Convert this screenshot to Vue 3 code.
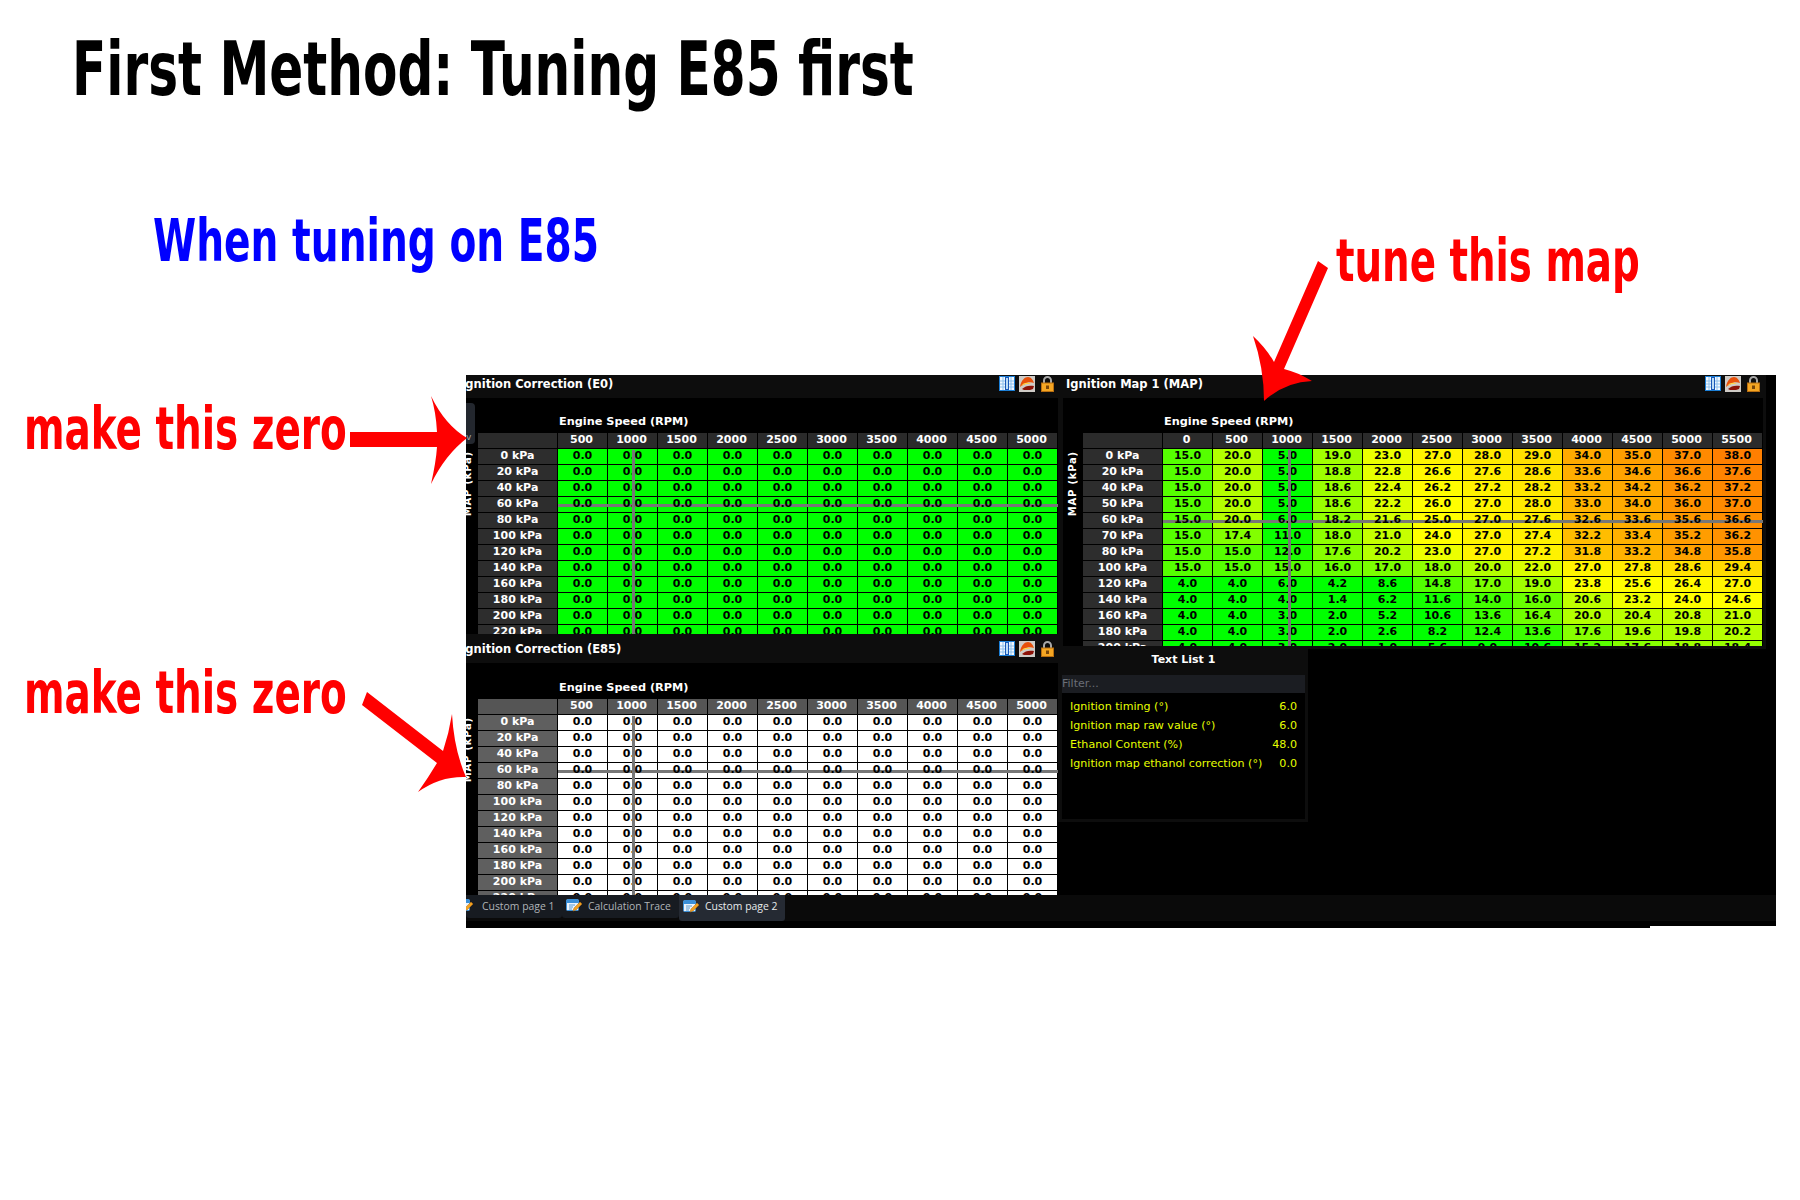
<script setup>
const heat = (v) => {
  // green -> yellow -> orange, same ramp the tuner uses for the map
  const r = Math.min(255, Math.max(0, Math.round(((v - 10.5) / 13.5) * 255)))
  const g = v <= 26 ? 255 : Math.max(127, Math.round(255 - ((v - 26) / 12) * 128))
  return `rgb(${r},${g},0)`
}

const correctionRpm = [500, 1000, 1500, 2000, 2500, 3000, 3500, 4000, 4500, 5000]
const correctionKpa = [0, 20, 40, 60, 80, 100, 120, 140, 160, 180, 200, 220]
const zeroRows = correctionKpa.map((kpa) => ({ kpa, values: correctionRpm.map(() => 0) }))

const mapRpm = [0, 500, 1000, 1500, 2000, 2500, 3000, 3500, 4000, 4500, 5000, 5500]
const mapRows = [
  { kpa: 0, values: [15, 20, 5, 19, 23, 27, 28, 29, 34, 35, 37, 38] },
  { kpa: 20, values: [15, 20, 5, 18.8, 22.8, 26.6, 27.6, 28.6, 33.6, 34.6, 36.6, 37.6] },
  { kpa: 40, values: [15, 20, 5, 18.6, 22.4, 26.2, 27.2, 28.2, 33.2, 34.2, 36.2, 37.2] },
  { kpa: 50, values: [15, 20, 5, 18.6, 22.2, 26, 27, 28, 33, 34, 36, 37] },
  { kpa: 60, values: [15, 20, 6, 18.2, 21.6, 25, 27, 27.6, 32.6, 33.6, 35.6, 36.6] },
  { kpa: 70, values: [15, 17.4, 11, 18, 21, 24, 27, 27.4, 32.2, 33.4, 35.2, 36.2] },
  { kpa: 80, values: [15, 15, 12, 17.6, 20.2, 23, 27, 27.2, 31.8, 33.2, 34.8, 35.8] },
  { kpa: 100, values: [15, 15, 15, 16, 17, 18, 20, 22, 27, 27.8, 28.6, 29.4] },
  { kpa: 120, values: [4, 4, 6, 4.2, 8.6, 14.8, 17, 19, 23.8, 25.6, 26.4, 27] },
  { kpa: 140, values: [4, 4, 4, 1.4, 6.2, 11.6, 14, 16, 20.6, 23.2, 24, 24.6] },
  { kpa: 160, values: [4, 4, 3, 2, 5.2, 10.6, 13.6, 16.4, 20, 20.4, 20.8, 21] },
  { kpa: 180, values: [4, 4, 3, 2, 2.6, 8.2, 12.4, 13.6, 17.6, 19.6, 19.8, 20.2] },
  { kpa: 200, values: [4, 4, 3, 2, 1, 5.6, 9, 10.6, 15.2, 17.6, 18.8, 18.4] }
]

const e0 = { title: 'Ignition Correction (E0)', rpm: correctionRpm, rows: zeroRows, kind: 'green', crossX: 154, crossY: 71 }
const e85 = { title: 'Ignition Correction (E85)', rpm: correctionRpm, rows: zeroRows, kind: 'white', crossX: 154, crossY: 71 }
const map = { title: 'Ignition Map 1 (MAP)', rpm: mapRpm, rows: mapRows, kind: 'heat', crossX: 205, crossY: 87 }

const cellStyle = (panel, v) => (panel.kind === 'heat' ? { background: heat(v) } : null)
const gridStyle = (panel) => ({ gridTemplateColumns: `80px repeat(${panel.rpm.length}, 50px)` })

const textList = [
  { name: 'Ignition timing (°)', value: '6.0' },
  { name: 'Ignition map raw value (°)', value: '6.0' },
  { name: 'Ethanol Content (%)', value: '48.0' },
  { name: 'Ignition map ethanol correction (°)', value: '0.0' }
]

const tabs = [
  { name: 'Custom page 1', width: 96, clip: true },
  { name: 'Calculation Trace', width: 117 },
  { name: 'Custom page 2', width: 106, active: true }
]
</script>

<template>
  <div class="page">
    <h1 class="heading">First Method: Tuning E85 first</h1>
    <h2 class="subheading">When tuning on E85</h2>

    <div class="screen">
      <div class="main">
        <div class="left-col">
          <section v-for="(panel, i) in [e0, e85]" :key="panel.title" class="panel" :class="i === 0 ? 'first' : 'late'">
            <div class="titlebar">
              <span class="title">{{ panel.title }}</span>
              <div class="tools">
                <svg width="16" height="15" viewBox="0 0 16 15"><rect x=".5" y=".5" width="15" height="14" fill="#f2f8ff" stroke="#1c7fd6"/><path d="M1 5h14M1 8h14M1 11h14M4 1v13M12 1v13" stroke="#8cc0ec"/><rect x="6.500" y="1.500" width="3" height="12" fill="#bcdcf5" stroke="#1858b8"/></svg>
                <svg width="16" height="16" viewBox="0 0 16 16"><rect width="16" height="16" fill="#cfcbc6"/><path d="M1 11C2 4 6 1 9 1c3 0 5 3 6 6-3-1-7-1-9 1-2 1-4 2-5 3z" fill="#e8500a"/><path d="M2 10c2-3 5-4 8-3l2 1-4 0c-2 0-4 1-6 2z" fill="#ffd24a"/><path d="M3 13c3-3 7-4 12-3l-1 3-3 1H5z" fill="#8c1208"/></svg>
                <svg width="13" height="16" viewBox="0 0 13 16"><path d="M3 7V4.500a3.500 3.500 0 0 1 7 0V7" fill="none" stroke="#a8a8a8" stroke-width="2"/><rect x=".5" y="7" width="12" height="8.500" fill="#f5a623" stroke="#b86e10"/><rect x="5" y="9.500" width="3" height="3.500" fill="#7a4608"/></svg>
              </div>
            </div>
            <div class="body">
              <div v-if="i === 0" class="side-tab">v</div>
              <div class="axis"><span>MAP (kPa)</span></div>
              <div class="table-wrap">
                <div class="rpm-label">Engine Speed (RPM)</div>
                <div class="grid" :class="panel.kind" :style="gridStyle(panel)">
                  <div class="corner"></div>
                  <div v-for="r in panel.rpm" :key="r" class="head">{{ r }}</div>
                  <template v-for="row in panel.rows" :key="row.kpa">
                    <div class="kpa">{{ row.kpa }} kPa</div>
                    <div v-for="(v, c) in row.values" :key="c" class="cell" :style="cellStyle(panel, v)"><span>{{ v.toFixed(1) }}</span></div>
                  </template>
                  <div class="cross-v" :style="{ left: panel.crossX + 'px' }"></div>
                  <div class="cross-h" :style="{ top: panel.crossY + 'px' }"></div>
                </div>
              </div>
            </div>
          </section>
        </div>

        <div class="right-col">
          <section class="panel first map">
            <div class="titlebar">
              <span class="title">{{ map.title }}</span>
              <div class="tools">
                <svg width="16" height="15" viewBox="0 0 16 15"><rect x=".5" y=".5" width="15" height="14" fill="#f2f8ff" stroke="#1c7fd6"/><path d="M1 5h14M1 8h14M1 11h14M4 1v13M12 1v13" stroke="#8cc0ec"/><rect x="6.500" y="1.500" width="3" height="12" fill="#bcdcf5" stroke="#1858b8"/></svg>
                <svg width="16" height="16" viewBox="0 0 16 16"><rect width="16" height="16" fill="#cfcbc6"/><path d="M1 11C2 4 6 1 9 1c3 0 5 3 6 6-3-1-7-1-9 1-2 1-4 2-5 3z" fill="#e8500a"/><path d="M2 10c2-3 5-4 8-3l2 1-4 0c-2 0-4 1-6 2z" fill="#ffd24a"/><path d="M3 13c3-3 7-4 12-3l-1 3-3 1H5z" fill="#8c1208"/></svg>
                <svg width="13" height="16" viewBox="0 0 13 16"><path d="M3 7V4.500a3.500 3.500 0 0 1 7 0V7" fill="none" stroke="#a8a8a8" stroke-width="2"/><rect x=".5" y="7" width="12" height="8.500" fill="#f5a623" stroke="#b86e10"/><rect x="5" y="9.500" width="3" height="3.500" fill="#7a4608"/></svg>
              </div>
            </div>
            <div class="body">
              <div class="axis"><span>MAP (kPa)</span></div>
              <div class="table-wrap">
                <div class="rpm-label">Engine Speed (RPM)</div>
                <div class="grid heat" :style="gridStyle(map)">
                  <div class="corner"></div>
                  <div v-for="r in map.rpm" :key="r" class="head">{{ r }}</div>
                  <template v-for="row in map.rows" :key="row.kpa">
                    <div class="kpa">{{ row.kpa }} kPa</div>
                    <div v-for="(v, c) in row.values" :key="c" class="cell" :style="cellStyle(map, v)"><span>{{ v.toFixed(1) }}</span></div>
                  </template>
                  <div class="cross-v" :style="{ left: map.crossX + 'px' }"></div>
                  <div class="cross-h" :style="{ top: map.crossY + 'px' }"></div>
                </div>
              </div>
            </div>
          </section>

          <section class="list-panel">
            <div class="list-title">Text List 1</div>
            <div class="filter">Filter...</div>
            <div class="list-body">
              <div v-for="item in textList" :key="item.name" class="list-row">
                <span>{{ item.name }}</span>
                <span>{{ item.value }}</span>
              </div>
            </div>
          </section>
        </div>
      </div>

      <div class="tabbar">
        <div v-for="tab in tabs" :key="tab.name" class="tab" :class="{ active: tab.active, clip: tab.clip }" :style="{ width: tab.width + 'px' }">
          <svg class="tab-icon" width="16" height="15" viewBox="0 0 16 15">
            <rect x=".5" y="1.500" width="12" height="11" rx="1" fill="#eaf3fb" stroke="#3a8fd8"/>
            <rect x="1" y="2" width="11" height="3" fill="#3a8fd8"/>
            <path d="M3 7h6M3 9h4M3 11h3" stroke="#5a9ad0"/>
            <path d="M7 13l1-3 6-6 2 2-6 6z" fill="#f0a020" stroke="#b86e10" stroke-width=".5"/>
          </svg>
          <span>{{ tab.name }}</span>
        </div>
      </div>
      <div class="footer">
        <div class="footer-a"></div>
        <div class="footer-b"></div>
      </div>
    </div>

    <div class="note zero-a">make this zero</div>
    <div class="note zero-b">make this zero</div>
    <div class="note tune">tune this map</div>

    <svg class="arrows" width="1800" height="1200" viewBox="0 0 1800 1200">
      <path d="M350 432H437Q436 412 431 396Q445 425 467 438Q445 455 431 484Q436 462 437 447H350Z" fill="#f00"/>
      <path d="M367 692L443 751Q449 733 452 714Q454 750 466 777Q440 776 418 792Q428 778 437 763L362 705Z" fill="#f00"/>
      <path d="M1318 261L1328 268L1284 369Q1297 372 1312 381Q1285 382 1264 401Q1264 368 1253 336Q1266 348 1274 362Z" fill="#f00"/>
    </svg>
  </div>
</template>

<style scoped>
.page {
  position: relative;
  width: 1800px;
  height: 1200px;
  overflow: hidden;
  background: #fff;
  font-family: "DejaVu Sans", sans-serif;
}
.heading, .subheading, .note {
  margin: 0;
  width: fit-content;
  font-family: "DejaVu Sans", sans-serif;
  font-stretch: condensed;
  font-weight: 700;
  white-space: nowrap;
  transform-origin: left center;
}
.heading {
  margin: 24px 0 0 72px;
  font-size: 75px;
  line-height: 90px;
  color: #000;
  transform: scaleX(0.743);
}
.subheading {
  margin: 92px 0 0 153px;
  font-size: 58px;
  line-height: 70px;
  color: #00f;
  transform: scaleX(0.75);
}
.note {
  position: absolute;
  font-size: 59px;
  line-height: 70px;
  color: #f00;
  transform: scaleX(0.733);
}
.zero-a { left: 24px; top: 394px; }
.zero-b { left: 24px; top: 658px; }
.tune { left: 1336px; top: 226px; transform: scaleX(0.73); }
.arrows {
  position: absolute;
  left: 0;
  top: 0;
  pointer-events: none;
}

.screen {
  position: absolute;
  left: 466px;
  top: 375px;
  width: 1310px;
  height: 553px;
  overflow: hidden;
  color: #fff;
}
.main {
  display: flex;
  height: 520px;
  background: #000;
}
.left-col {
  width: 592px;
  overflow: hidden;
  flex: none;
}
.right-col {
  flex: 1;
  min-width: 0;
}
.panel {
  position: relative;
  overflow: hidden;
  background: #000;
}
.left-col .panel {
  margin-left: -13px;
  width: 605px;
}
.panel.first {
  margin-top: -6px;
  height: 265px;
}
.panel.late {
  height: 261px;
}
.panel.map {
  width: 708px;
  height: 280px;
  border-left: 5px solid #0d0d0d;
  border-right: 3px solid #0d0d0d;
  border-bottom: 3px solid #0d0d0d;
  box-sizing: border-box;
}
.titlebar {
  display: flex;
  align-items: center;
  justify-content: space-between;
  height: 29px;
  padding: 0 4px 0 8px;
  background: #0d0d0d;
  box-sizing: border-box;
}
.panel.map .titlebar {
  margin-left: -5px;
  margin-right: -3px;
  padding-left: 8px;
  padding-right: 6px;
}
.title {
  font-size: 11.500px;
  font-weight: 700;
}
.tools {
  display: flex;
  align-items: center;
  gap: 4px;
}
.tools svg:last-child {
  margin-left: 2px;
}
.body {
  position: relative;
  display: flex;
  padding: 35px 0 0 5px;
}
.panel.map .body {
  padding-left: 0;
}
.late .body {
  padding-top: 36px;
}
.side-tab {
  position: absolute;
  left: 0;
  top: 5px;
  width: 22px;
  height: 41px;
  padding: 28px 0 0 13px;
  box-sizing: border-box;
  border-radius: 0 4px 4px 0;
  background: #23272e;
  font-size: 9px;
  line-height: 12px;
  color: #aaa;
}
.axis {
  position: relative;
  width: 20px;
  flex: none;
}
.axis span {
  position: absolute;
  left: 4px;
  top: 18px;
  writing-mode: vertical-rl;
  transform: rotate(180deg);
  font-size: 10px;
  font-weight: 700;
  letter-spacing: 0.800px;
  line-height: 12px;
  white-space: nowrap;
}
.rpm-label {
  position: absolute;
  top: 16px;
  margin-left: 81px;
  font-size: 11.300px;
  font-weight: 700;
  line-height: 16px;
  white-space: nowrap;
}
.late .rpm-label {
  top: 17px;
}
.grid {
  position: relative;
  display: grid;
  grid-auto-rows: 16px;
  width: max-content;
  font-size: 11px;
  font-weight: 700;
  line-height: 14px;
  text-align: center;
}
.grid > div {
  box-sizing: border-box;
}
.corner, .head {
  height: 15px;
  border-right: 1px solid #000;
  background: #2b2b2b;
}
.head {
  padding-right: 2px;
}
.kpa {
  border-right: 1px solid #000;
  border-bottom: 1px solid #000;
  background: #2d2d2d;
}
.white .head, .white .corner {
  background: #555;
}
.white .kpa {
  background: #5f5f5f;
}
.cell {
  border-right: 1px solid #000;
  border-bottom: 1px solid #000;
  color: #000;
}
.cell span {
  position: relative;
  z-index: 2;
}
.green .cell {
  background: #0f0;
}
.white .cell {
  background: #fff;
}
.cross-v {
  position: absolute;
  top: 17px;
  bottom: -200px;
  z-index: 3;
  width: 3px;
  background: #777;
}
.cross-h {
  position: absolute;
  left: 80px;
  right: 0;
  z-index: 1;
  height: 3px;
  background: #777;
}

.list-panel {
  width: 250px;
  height: 173px;
  padding: 0 3px 3px 4px;
  box-sizing: border-box;
  display: flex;
  flex-direction: column;
  background: #0d0d0d;
}
.list-title {
  height: 26px;
  flex: none;
  font-size: 11px;
  font-weight: 700;
  line-height: 21px;
  text-align: center;
}
.filter {
  height: 18px;
  flex: none;
  background: #1b1d22;
  color: #6a6e76;
  font-size: 11px;
  line-height: 18px;
}
.list-body {
  flex: 1;
  padding: 4px 8px 0;
  background: #000;
  color: #e6ff00;
  font-size: 11.100px;
  line-height: 19px;
}
.list-row {
  display: flex;
  justify-content: space-between;
}

.tabbar {
  display: flex;
  height: 26px;
  background: #0a0a0a;
}
.tab {
  display: flex;
  align-items: center;
  gap: 6px;
  height: 23px;
  padding: 0 0 2px 4px;
  box-sizing: border-box;
  border-radius: 0 0 3px 3px;
  background: #171b21;
  color: #b0b4b8;
  font-family: "Open Sans", sans-serif;
  font-size: 10.400px;
  white-space: nowrap;
}
.tab.clip {
  padding-left: 0;
  gap: 9px;
}
.tab.clip .tab-icon {
  margin-left: -9px;
}
.tab.active {
  height: 26px;
  padding-bottom: 4px;
  background: #252a33;
  color: #e8eaec;
}
.tab-icon {
  flex: none;
}
.footer {
  display: flex;
  height: 7px;
}
.footer-a {
  width: 1184px;
  background: #000;
}
.footer-b {
  flex: 1;
  height: 5px;
  background: #000;
}
</style>
